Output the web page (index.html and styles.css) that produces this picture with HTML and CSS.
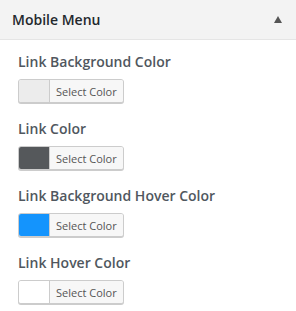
FILE: index.html
```html
<!DOCTYPE html>
<html lang="en">
<head>
    <meta charset="UTF-8">
    <meta name="viewport" content="width=device-width, initial-scale=1.0">
    <title>Mobile Menu</title>
    <link rel="stylesheet" href="styles.css">
</head>
<body>
    <div class="panel">
        <div class="panel-header">
            <h3>Mobile Menu</h3>
            <span class="toggle"></span>
        </div>

        <div class="panel-body">
            <div class="field">
                <label>Link Background Color</label>
                <button class="color-btn">
                    <span class="swatch swatch-light"></span>
                    <span class="btn-text">Select Color</span>
                </button>
            </div>
            <div class="field">
                <label>Link Color</label>
                <button class="color-btn">
                    <span class="swatch swatch-dark"></span>
                    <span class="btn-text">Select Color</span>
                </button>
            </div>
            <div class="field">
                <label>Link Background Hover Color</label>
                <button class="color-btn">
                    <span class="swatch swatch-blue"></span>
                    <span class="btn-text">Select Color</span>
                </button>
            </div>
            <div class="field">
                <label>Link Hover Color</label>
                <button class="color-btn">
                    <span class="swatch swatch-white"></span>
                    <span class="btn-text">Select Color</span>
                </button>
            </div>
        </div>
    </div>
</body>
</html>
```

FILE: styles.css
```css
body {
    font-family: 'Open Sans', sans-serif;
    margin: 0;
    background: #fff;
}
.panel-header {
    display: flex;
    align-items: center;
    justify-content: space-between;
    height: 39px;
    padding: 0 14px 0 12px;
    background: #f3f3f3;
    border-bottom: 1px solid #e5e5e5;
}
.panel-header h3 {
    margin: 0;
    font-size: 14px;
    font-weight: 600;
    color: #23282d;
}
.toggle {
    width: 0;
    height: 0;
    border-left: 4px solid transparent;
    border-right: 4px solid transparent;
    border-bottom: 7px solid #555;
    margin-top: -1px;
}
.panel-body {
    padding: 12px 18px 0;
}
.field {
    margin-bottom: 16px;
}
.field label {
    display: block;
    font-size: 14px;
    line-height: 20px;
    font-weight: 600;
    color: #50575e;
    margin-bottom: 7px;
}
.color-btn {
    display: flex;
    align-items: stretch;
    height: 24px;
    padding: 0;
    border: 1px solid #ccc;
    border-radius: 3px;
    box-shadow: 0 1px 0 #ccc;
    background: #f7f7f7;
    overflow: hidden;
    cursor: pointer;
    font-family: inherit;
}
.swatch {
    width: 30px;
}
.swatch-light { background: #ececec; }
.swatch-dark { background: #55585b; }
.swatch-blue { background: #1494fd; }
.swatch-white { background: #fff; }
.btn-text {
    display: flex;
    align-items: center;
    padding: 0 6px;
    border-left: 1px solid #ccc;
    background: #f7f7f7;
    font-size: 11px;
    color: #555;
}
```
